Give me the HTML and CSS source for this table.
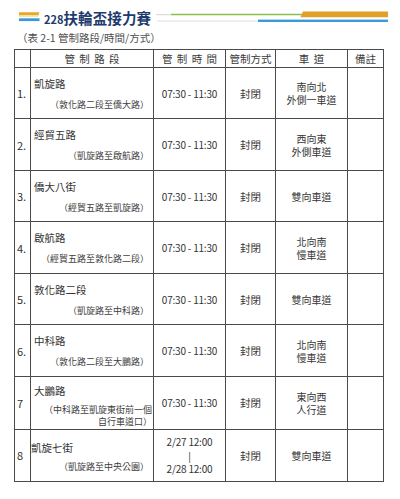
FILE: index.html
```html
<!DOCTYPE html>
<html lang="zh-Hant">
<head>
<meta charset="utf-8">
<link rel="stylesheet" href="styles.css">
</head>
<body>
<div class="page">
  <header class="banner">
    <svg class="logo" width="21" height="12" viewBox="0 0 21 12">
      <polygon points="0,1.3 20.5,1.3 19.5,4.3 0,4.3" fill="#e9a72c"/>
      <polygon points="0,4.3 19.5,4.3 19,5.8 0,5.8" fill="#f6dd8f"/>
      <rect x="0" y="7.3" width="20.5" height="2.8" fill="#3a9bd8"/>
    </svg>
    <h1 class="title"><span class="num">228</span>扶輪盃接力賽</h1>
    <svg class="rule" width="233" height="13" viewBox="0 0 233 13">
      <line x1="0" y1="4.7" x2="15" y2="4.7" stroke="#d6d6d6" stroke-width="1"/>
      <line x1="15" y1="4.6" x2="146" y2="4.6" stroke="#8cc04c" stroke-width="1.5"/>
      <polygon points="147,1.4 232,1.4 232,7.2 144.5,7.2" fill="#e0a126"/>
      <line x1="1" y1="11" x2="102" y2="11" stroke="#dedede" stroke-width="1"/>
      <rect x="102" y="9.6" width="130" height="2.4" fill="#3a9bd8"/>
    </svg>
  </header>
  <p class="caption">（表 2-1 管制路段/時間/方式）</p>
  <table class="grid">
    <colgroup>
      <col class="c-no"><col class="c-road"><col class="c-time"><col class="c-mode"><col class="c-lane"><col class="c-note">
    </colgroup>
    <thead>
      <tr class="head">
        <th>&nbsp;</th><th class="sp">管 制 路 段</th><th class="sp">管 制 時 間</th><th>管制方式</th><th class="sp">車 道</th><th>備註</th>
      </tr>
    </thead>
    <tbody>
      <tr class="odd">
        <td class="no">1.</td>
        <td class="road"><div class="rc"><div class="name">凱旋路</div><div class="sub">（敦化路二段至僑大路）</div></div></td>
        <td class="time">07:30 - 11:30</td><td class="mode">封閉</td>
        <td class="lane">南向北<br>外側一車道</td><td></td>
      </tr>
      <tr class="even">
        <td class="no">2.</td>
        <td class="road"><div class="rc"><div class="name">經貿五路</div><div class="sub">（凱旋路至啟航路）</div></div></td>
        <td class="time">07:30 - 11:30</td><td class="mode">封閉</td>
        <td class="lane">西向東<br>外側車道</td><td></td>
      </tr>
      <tr class="odd">
        <td class="no">3.</td>
        <td class="road"><div class="rc"><div class="name">僑大八街</div><div class="sub">（經貿五路至凱旋路）</div></div></td>
        <td class="time">07:30 - 11:30</td><td class="mode">封閉</td>
        <td class="lane">雙向車道</td><td></td>
      </tr>
      <tr class="even">
        <td class="no">4.</td>
        <td class="road"><div class="rc"><div class="name">啟航路</div><div class="sub">（經貿五路至敦化路二段）</div></div></td>
        <td class="time">07:30 - 11:30</td><td class="mode">封閉</td>
        <td class="lane">北向南<br>慢車道</td><td></td>
      </tr>
      <tr class="odd">
        <td class="no">5.</td>
        <td class="road"><div class="rc"><div class="name">敦化路二段</div><div class="sub">（凱旋路至中科路）</div></div></td>
        <td class="time">07:30 - 11:30</td><td class="mode">封閉</td>
        <td class="lane">雙向車道</td><td></td>
      </tr>
      <tr class="even">
        <td class="no">6.</td>
        <td class="road"><div class="rc"><div class="name">中科路</div><div class="sub">（敦化路二段至大鵬路）</div></div></td>
        <td class="time">07:30 - 11:30</td><td class="mode">封閉</td>
        <td class="lane">北向南<br>慢車道</td><td></td>
      </tr>
      <tr class="odd">
        <td class="no">7</td>
        <td class="road"><div class="rc r7"><div class="name">大鵬路</div><div class="sub">（中科路至凱旋東街前一個<br>自行車道口）</div></div></td>
        <td class="time">07:30 - 11:30</td><td class="mode">封閉</td>
        <td class="lane">東向西<br>人行道</td><td></td>
      </tr>
      <tr class="even">
        <td class="no">8</td>
        <td class="road"><div class="rc r8"><div class="name">凱旋七街</div><div class="sub">（凱旋路至中央公園）</div></div></td>
        <td class="time multi">2/27 12:00<br>|<br>2/28 12:00</td><td class="mode">封閉</td>
        <td class="lane">雙向車道</td><td></td>
      </tr>
    </tbody>
  </table>
</div>
</body>
</html>
```
FILE: styles.css
```css
html, body {
  margin: 0;
  padding: 0;
  background: #ffffff;
}
body {
  font-family: "Noto Sans CJK TC", "Noto Sans", sans-serif;
  color: #363636;
}
.page {
  width: 400px;
  height: 499px;
  overflow: hidden;
}
.banner {
  display: flex;
  align-items: flex-start;
  height: 30px;
  padding-left: 19px;
}
.logo {
  margin-top: 11px;
  flex: none;
}
.title {
  margin: 8px 0 0 4px;
  font-size: 14.5px;
  font-weight: 700;
  line-height: 20px;
  color: #1d3b6c;
  white-space: nowrap;
  letter-spacing: 0.1px;
}
.title .num {
  font-size: 11px;
  letter-spacing: 0;
}
.rule {
  margin-left: 5px;
  margin-top: 10px;
  flex: none;
}
.caption {
  margin: 1px 0 0 17px;
  font-size: 10.5px;
  line-height: 14px;
  color: #505050;
}
.grid {
  margin: 4px 0 0 14px;
  border-collapse: collapse;
  table-layout: fixed;
  width: 370px;
}
.c-no { width: 16px; }
.c-road { width: 123px; }
.c-time { width: 72px; }
.c-mode { width: 50px; }
.c-lane { width: 72px; }
.c-note { width: 36px; }
.grid th, .grid td {
  border: 1px solid #4a4a4a;
  padding: 0;
}
.head th {
  height: 17px;
  font-size: 10.5px;
  font-weight: 400;
  line-height: 17px;
  text-align: center;
  color: #3a3a3a;
}
.head th.sp {
  word-spacing: 2px;
}
.odd td { height: 50px; }
.even td { height: 51px; }
.no {
  font-size: 11px;
  text-align: left;
  vertical-align: middle;
  color: #303030;
}
td.no {
  padding-left: 2px;
}
.road {
  vertical-align: top;
}
.rc {
  padding: 8px 4px 0 3px;
}
.rc .name {
  font-size: 10.5px;
  line-height: 16px;
  color: #333;
}
.rc .sub {
  margin-top: 6px;
  font-size: 9px;
  line-height: 14px;
  text-align: right;
  color: #404040;
  white-space: nowrap;
}
.rc.r7 {
  padding-top: 6px;
  padding-right: 1px;
}
.rc.r7 .sub {
  margin-top: 5px;
  line-height: 12.4px;
}
.rc.r8 {
  padding-top: 10px;
  padding-left: 0;
}
.rc.r8 .sub {
  margin-top: 4px;
}
.time, .mode, .lane {
  text-align: center;
  vertical-align: middle;
}
.time {
  font-size: 10px;
  letter-spacing: -0.2px;
  color: #333;
}
.time.multi {
  line-height: 13.5px;
}
.mode {
  font-size: 10.5px;
}
.lane {
  font-size: 10px;
  line-height: 13px;
}
```
